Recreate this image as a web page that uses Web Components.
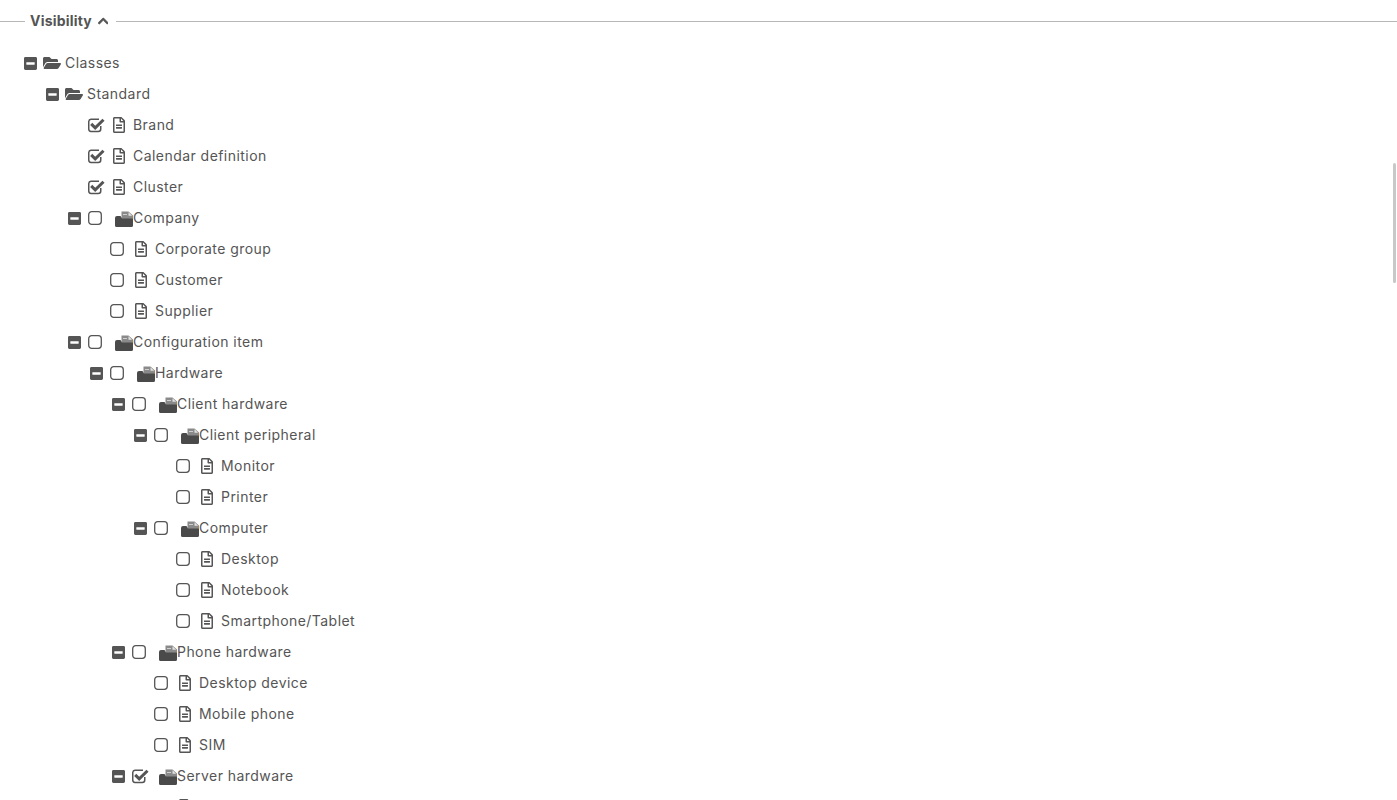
<!DOCTYPE html><html lang="en"><head><meta charset="utf-8"><title>Visibility</title><style>
html,body{margin:0;background:#fff;height:800px;overflow:hidden}
body{font-family:Inter,"Liberation Sans",sans-serif;color:#555;position:relative}
</style></head><body>
<x-panel>
  <x-legend slot="legend">Visibility</x-legend>
  <x-node label="Classes" icon="open" expand>
    <x-node label="Standard" icon="open" expand>
      <x-node label="Brand" icon="file" check="on"></x-node>
      <x-node label="Calendar definition" icon="file" check="on"></x-node>
      <x-node label="Cluster" icon="file" check="on"></x-node>
      <x-node label="Company" icon="stack" check="off" expand>
        <x-node label="Corporate group" icon="file" check="off"></x-node>
        <x-node label="Customer" icon="file" check="off"></x-node>
        <x-node label="Supplier" icon="file" check="off"></x-node>
      </x-node>
      <x-node label="Configuration item" icon="stack" check="off" expand>
        <x-node label="Hardware" icon="stack" check="off" expand>
          <x-node label="Client hardware" icon="stack" check="off" expand>
            <x-node label="Client peripheral" icon="stack" check="off" expand>
              <x-node label="Monitor" icon="file" check="off"></x-node>
              <x-node label="Printer" icon="file" check="off"></x-node>
            </x-node>
            <x-node label="Computer" icon="stack" check="off" expand>
              <x-node label="Desktop" icon="file" check="off"></x-node>
              <x-node label="Notebook" icon="file" check="off"></x-node>
              <x-node label="Smartphone/Tablet" icon="file" check="off"></x-node>
            </x-node>
          </x-node>
          <x-node label="Phone hardware" icon="stack" check="off" expand>
            <x-node label="Desktop device" icon="file" check="off"></x-node>
            <x-node label="Mobile phone" icon="file" check="off"></x-node>
            <x-node label="SIM" icon="file" check="off"></x-node>
          </x-node>
          <x-node label="Server hardware" icon="stack" check="on" expand>
            <x-node label="" icon="file"></x-node>
          </x-node>
        </x-node>
      </x-node>
    </x-node>
  </x-node>
</x-panel>
<x-thumb></x-thumb>
<script>
const ICONS={
 minus:'<svg width="13" height="13" viewBox="0 0 448 448" style="display:block"><path transform="translate(0,-32)" fill="currentColor" d="M400 32H48C21.5 32 0 53.5 0 80v352c0 26.5 21.5 48 48 48h352c26.5 0 48-21.5 48-48V80c0-26.5-21.5-48-48-48zM92 296c-6.6 0-12-5.4-12-12v-56c0-6.6 5.4-12 12-12h264c6.6 0 12 5.4 12 12v56c0 6.6-5.4 12-12 12H92z"/></svg>',
 open:'<svg width="18" height="16" viewBox="0 0 576 512" style="display:block"><path fill="currentColor" d="M572.694 292.093L500.27 416.248A63.997 63.997 0 0 1 444.989 448H45.025c-18.523 0-30.064-20.093-20.731-36.093l72.424-124.155A64 64 0 0 1 152 256h399.964c18.523 0 30.064 20.093 20.73 36.093zM152 224h328v-48c0-26.51-21.49-48-48-48H272l-64-64H48C21.49 64 0 85.49 0 112v278.046l69.077-118.418C86.214 242.25 117.989 224 152 224z"/></svg>',
 file:'<svg width="12" height="16" viewBox="0 0 384 512" style="display:block"><path fill="currentColor" d="M288 248v28c0 6.6-5.4 12-12 12H108c-6.6 0-12-5.4-12-12v-28c0-6.6 5.4-12 12-12h168c6.6 0 12 5.4 12 12zm-12 72H108c-6.6 0-12 5.4-12 12v28c0 6.6 5.4 12 12 12h168c6.6 0 12-5.4 12-12v-28c0-6.6-5.4-12-12-12zm108-188.1V464c0 26.5-21.5 48-48 48H48c-26.5 0-48-21.5-48-48V48C0 21.5 21.5 0 48 0h204.1C264.8 0 277 5.1 286 14.1L369.9 98c9 8.9 14.1 21.2 14.1 33.9zm-128-80V128h76.1L256 51.9zM336 464V176H232c-13.3 0-24-10.7-24-24V48H48v416h288z"/></svg>',
 stack:'<svg width="18" height="16" viewBox="0 0 18 16" style="display:block"><path fill="#8a8a8a" d="M6.500 .5h7L18 4.500v9H6.500z"/><path fill="#e2e2e2" d="M13.500 1.300v3.500H17.200z"/><path fill="#cfcfcf" d="M8 3h4v1H8z"/><path fill="#4a4a4a" d="M2 5H5.500L7 7.500H17.500A.5.5 0 0 1 18 8V14.500A1.500 1.500 0 0 1 16.500 16H1.500A1.500 1.500 0 0 1 0 14.500V7A2 2 0 0 1 2 5z"/></svg>',
 on:'<svg width="17" height="15" viewBox="0 0 17 15" style="display:block"><path fill="none" stroke="currentColor" stroke-width="1.500" d="M12.750 8V11A2.500 2.500 0 0 1 10.250 13.500H3A2.500 2.500 0 0 1 .75 11V3.500A2.500 2.500 0 0 1 3 1.250H11"/><path fill="none" stroke="currentColor" stroke-width="3" stroke-linejoin="miter" d="M3.200 5.900L7.200 9.800L15.500 1.700"/></svg>',
 off:'<svg width="14" height="14" viewBox="0 0 14 14" style="display:block"><rect x=".7" y=".7" width="12.600" height="12.600" rx="3" fill="none" stroke="currentColor" stroke-width="1.300"/></svg>'
};
const def=(n,c)=>customElements.define(n,c);
def('x-panel',class extends HTMLElement{constructor(){super();this.attachShadow({mode:'open'}).innerHTML=`<style>
:host{display:block;height:800px;overflow:hidden}
.tree{padding:15.500px 0 0 22px}
</style><slot name="legend"></slot><div class="tree"><slot></slot></div>`}});
def('x-legend',class extends HTMLElement{constructor(){super();this.attachShadow({mode:'open'}).innerHTML=`<style>
:host{display:flex;align-items:center;height:21px;margin-top:11px;font-weight:700;font-size:14px;color:#555}
.l{height:1px;background:#b8b8b8}
.a{width:25px}.b{flex:1}
.t{padding:0 8px 2px 5px;display:flex;align-items:center;gap:6px;letter-spacing:.2px}
svg{display:block}
</style><div class="l a"></div><div class="t"><slot></slot><svg width="10.500" height="12" viewBox="0 0 448 512"><path fill="currentColor" stroke="currentColor" stroke-width="24" d="M240.971 130.524l194.343 194.343c9.373 9.373 9.373 24.569 0 33.941l-22.667 22.667c-9.357 9.357-24.522 9.375-33.901.04L224 227.495 69.255 381.516c-9.379 9.335-24.544 9.317-33.901-.04l-22.667-22.667c-9.373-9.373-9.373-24.569 0-33.941L207.03 130.525c9.372-9.373 24.568-9.373 33.941-.001z"/></svg></div><div class="l b"></div>`}});
def('x-node',class extends HTMLElement{constructor(){super();
 const ic=this.getAttribute('icon'),ck=this.getAttribute('check'),ex=this.hasAttribute('expand');
 this.attachShadow({mode:'open'}).innerHTML=`<style>
:host{display:block;font-size:14px;letter-spacing:.45px;color:#555}
.row{display:flex;align-items:center;height:31px;white-space:nowrap}
.exp{width:22px;flex:none;padding-left:1.500px;box-sizing:border-box}
.ck{width:25px;flex:none}
.ic{flex:none}
.ic.file{width:20px}
.ic.open{width:22px;margin-left:-1px}
.ic.stack{margin-left:2px;width:18px;position:relative;top:1px}
.lb{margin-bottom:2px}
.kids{padding-left:22px}
</style><div class="row"><div class="exp">${ex?ICONS.minus:''}</div>${ck?`<div class="ck">${ICONS[ck]}</div>`:`<div class="ck" style="${ic==='file'?'':'display:none'}"></div>`}<div class="ic ${ic}">${ICONS[ic]}</div><span class="lb"></span></div><div class="kids"><slot></slot></div>`;
 this.shadowRoot.querySelector('.lb').textContent=this.getAttribute('label');
}});
def('x-thumb',class extends HTMLElement{constructor(){super();this.attachShadow({mode:'open'}).innerHTML=`<style>
:host{position:absolute;right:1px;top:163px;width:3px;height:120px;background:#c8c8c8;border-radius:2px}
</style>`}});
</script></body></html>
